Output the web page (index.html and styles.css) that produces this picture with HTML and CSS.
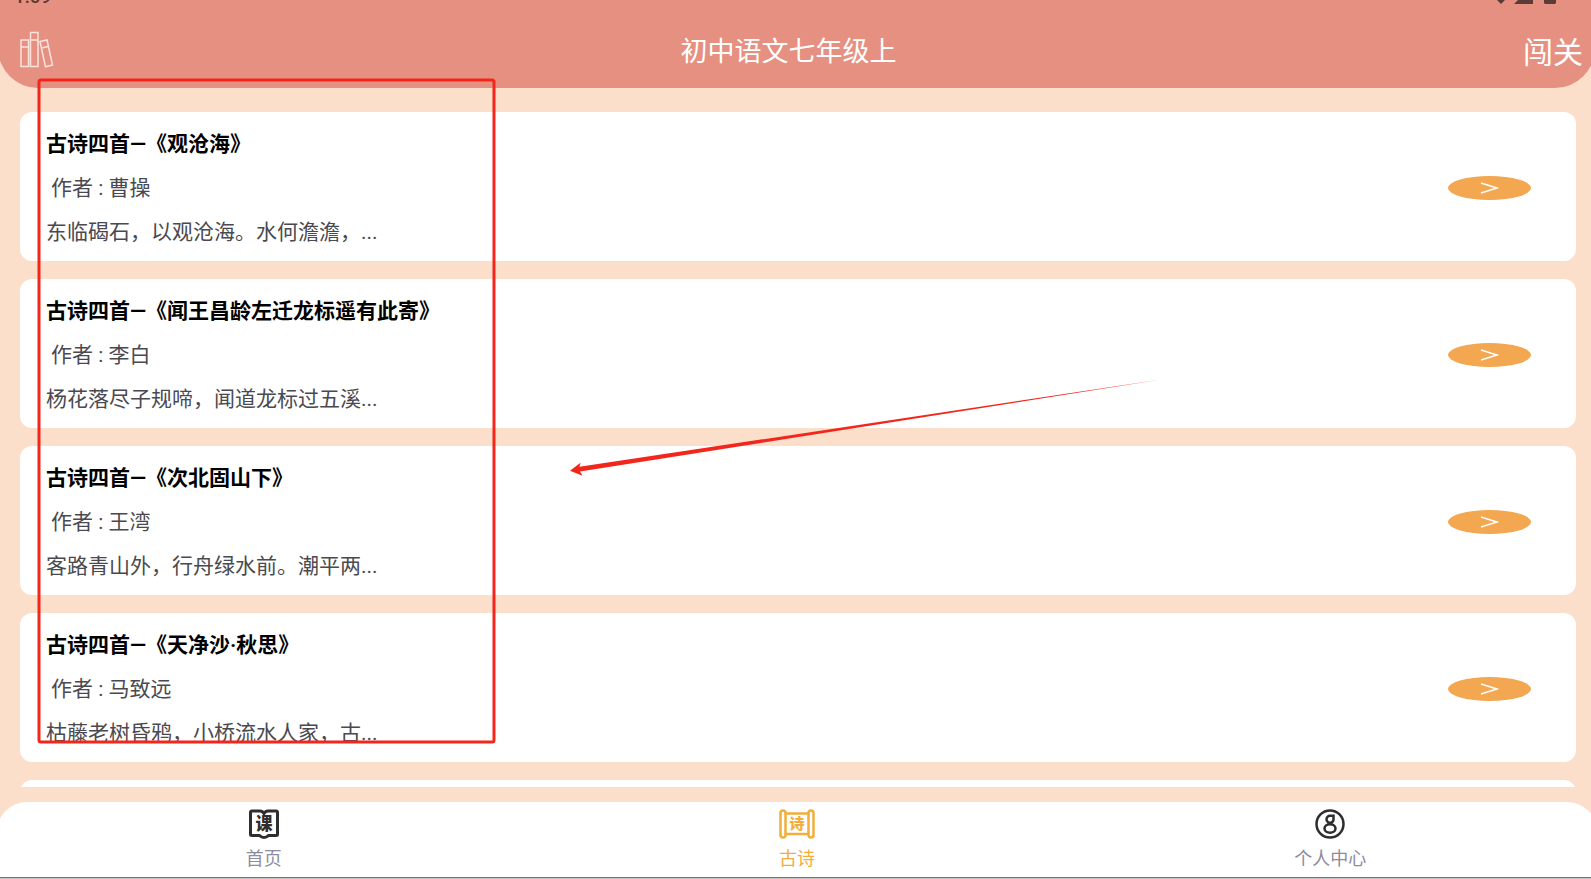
FILE: index.html
```html
<!DOCTYPE html>
<html lang="zh-CN">
<head>
  <meta charset="UTF-8" />
  <meta name="viewport" content="width=device-width, initial-scale=1.0"/>
  <title>初中语文七年级上</title>
  <link rel="stylesheet" href="styles.css">
</head>
<body>
  <div class="app">
    <header class="header">
      <div class="status-bar">
        <span class="clock">1:09</span>
        <svg class="status-icons" width="60" height="4" viewBox="0 0 60 4" aria-hidden="true">
          <path d="M0 0h8L4 4z M17 4l4-4h15v4z M47 0h12v3l-1 1H48l-1-1z"/>
        </svg>
      </div>
      <div class="toolbar">
        <button class="books" aria-label="books">
          <svg width="34" height="38" viewBox="0 0 34 38">
            <path d="M1 9h7.500v26.500H1z M1 16h7.500 M10.500 1.500h7.500v34h-7.500z M10.500 9h7.500 M20 10.500l7-1.500 5.500 25-7 1.800z M21.500 17l7-1.600"/>
          </svg>
        </button>
        <h1>初中语文七年级上</h1>
        <button class="challenge">闯关</button>
      </div>
    </header>

    <ul class="list">
      <li class="card">
        <div class="poem">
          <h2>古诗四首—《观沧海》</h2>
          <p class="author">作者 : 曹操</p>
          <p>东临碣石，以观沧海。水何澹澹，...</p>
        </div>
        <button class="go" aria-label="观沧海"><svg width="20" height="12" viewBox="0 0 20 12"><path d="M1 1l16 5-16 5"/></svg></button>
      </li>
      <li class="card">
        <div class="poem">
          <h2>古诗四首—《闻王昌龄左迁龙标遥有此寄》</h2>
          <p class="author">作者 : 李白</p>
          <p>杨花落尽子规啼，闻道龙标过五溪...</p>
        </div>
        <button class="go" aria-label="闻王昌龄左迁龙标遥有此寄"><svg width="20" height="12" viewBox="0 0 20 12"><path d="M1 1l16 5-16 5"/></svg></button>
      </li>
      <li class="card">
        <div class="poem">
          <h2>古诗四首—《次北固山下》</h2>
          <p class="author">作者 : 王湾</p>
          <p>客路青山外，行舟绿水前。潮平两...</p>
        </div>
        <button class="go" aria-label="次北固山下"><svg width="20" height="12" viewBox="0 0 20 12"><path d="M1 1l16 5-16 5"/></svg></button>
      </li>
      <li class="card">
        <div class="poem">
          <h2>古诗四首—《天净沙·秋思》</h2>
          <p class="author">作者 : 马致远</p>
          <p>枯藤老树昏鸦，小桥流水人家，古...</p>
        </div>
        <button class="go" aria-label="天净沙·秋思"><svg width="20" height="12" viewBox="0 0 20 12"><path d="M1 1l16 5-16 5"/></svg></button>
      </li>
      <li class="card"></li>
    </ul>

    <nav class="tabs">
      <a href="#home">
        <svg width="36" height="30" viewBox="0 0 36 30">
          <path class="line" d="M18 4.500Q16.500 2 14 2H6Q4.500 2 4.500 3.500V25.500Q4.500 26.500 6 26.500H13.500Q15.500 28.500 18 28.500T22.500 26.500H30Q31.500 26.500 31.500 25.500V3.500Q31.500 2 30 2H22Q19.500 2 18 4.500z"/>
          <text x="18" y="21" font-size="17">课</text>
        </svg>
        <span>首页</span>
      </a>
      <a href="#poems" class="active">
        <svg width="36" height="30" viewBox="0 0 36 30">
          <path class="line" d="M7 4.500H29 M7 25H29"/>
          <rect class="line" x="1.500" y="1.500" width="5" height="27" rx="2.500"/>
          <rect class="line" x="29.500" y="1.500" width="5" height="27" rx="2.500"/>
          <text x="18" y="20" font-size="15">诗</text>
        </svg>
        <span>古诗</span>
      </a>
      <a href="#me">
        <svg width="36" height="30" viewBox="0 0 36 30">
          <circle class="line thin" cx="18" cy="15" r="13.500"/>
          <path class="line thin" d="M21.500 6.800V10A3.500 3.500 0 1 1 18 6.800z"/>
          <ellipse class="line thin" cx="18" cy="19.500" rx="5.500" ry="4.200"/>
        </svg>
        <span>个人中心</span>
      </a>
    </nav>
    <div class="edge"></div>
  </div>

  <!-- highlight box and arrow over the list -->
  <svg class="marks" width="1170" height="750" viewBox="0 0 1170 750" aria-hidden="true">
    <rect x="39" y="80" width="455" height="662" rx="2"/>
    <path d="M570 470.700L580.500 462.700 579.500 466.800 1161 379.500 580 471.600 582.500 475.700z"/>
  </svg>
</body>
</html>
```
FILE: styles.css
```css
:root {
  --primary: #e59081;
  --background: #fcdfcb;
  --orange: #f3a750;
  --active: #f2ae3d;
  --text: #4a494f;
  --red: #f3261b;
}

* {
  box-sizing: border-box;
  margin: 0;
  padding: 0;
  font-family: Roboto, "Noto Sans CJK SC", sans-serif;
}

body {
  background: var(--background);
  color: var(--text);
  overflow: hidden;
}

button {
  border: none;
  background: none;
  color: #fff;
  cursor: pointer;
}

.app {
  display: flex;
  flex-direction: column;
  height: 100vh;
}

.header {
  height: 88px;
  margin: 0 -4px 0 -2px;
  background: var(--primary);
  border-radius: 0 0 40px 40px;
  overflow: hidden;
}

.status-bar {
  display: flex;
  justify-content: space-between;
  align-items: flex-end;
  height: 4px;
  padding: 0 38px 0 16px;
  color: #5c3a35;
}

.clock {
  font-size: 19px;
  font-weight: 500;
  line-height: 14px;
}

.status-icons {
  fill: #5c3a35;
}

.toolbar {
  display: flex;
  justify-content: space-between;
  align-items: center;
  height: 91px;
  padding: 0 12px 0 22px;
}

.books {
  width: 34px;
  height: 38px;
}

.books svg {
  display: block;
  fill: none;
  stroke: #fbe3dd;
  stroke-width: 1.5;
}

.toolbar h1 {
  font-size: 27px;
  font-weight: 400;
  color: #fff;
}

.challenge {
  font-size: 30px;
}

.list {
  flex: 1;
  min-height: 0;
  display: flex;
  flex-direction: column;
  gap: 18px;
  margin-bottom: 15px;
  padding: 24px 15px 0 20px;
  list-style: none;
  overflow: hidden;
}

.card {
  flex: none;
  display: flex;
  justify-content: space-between;
  align-items: center;
  min-height: 149px;
  padding: 10px 45px 7px 26px;
  background: #fff;
  border-radius: 12px;
}

.poem {
  font-size: 21px;
  line-height: 44px;
}

.poem h2 {
  font-size: 21px;
  font-weight: 700;
  color: #000;
}

.author {
  padding-left: 5px;
}

.go {
  display: flex;
  justify-content: center;
  align-items: center;
  width: 83px;
  height: 24px;
  background: var(--orange);
  border-radius: 50%;
}

.go svg {
  fill: none;
  stroke: #fff;
  stroke-width: 1.5;
}

.tabs {
  display: grid;
  grid-template-columns: repeat(3, 1fr);
  height: 75px;
  margin: 0 -6px 0 -3px;
  background: #fff;
  border-radius: 30px 30px 0 0;
}

.tabs a {
  display: flex;
  flex-direction: column;
  align-items: center;
  gap: 7px;
  padding-top: 7px;
  font-size: 18px;
  line-height: 26px;
  color: #8d8b9f;
  text-decoration: none;
}

.tabs svg {
  fill: #2e2e2e;
  stroke: none;
}

.tabs text {
  font-weight: 900;
  text-anchor: middle;
}

.tabs .line {
  fill: none;
  stroke: #2e2e2e;
  stroke-width: 3;
}

.tabs .thin {
  stroke-width: 2.5;
}

.tabs .active {
  color: var(--active);
}

.tabs .active svg {
  fill: var(--active);
}

.tabs .active .line {
  stroke: var(--active);
  stroke-width: 2.5;
}

.edge {
  height: 2px;
  background: #c4c4c4;
  border-top: 1px solid #747474;
}

.marks {
  position: absolute;
  top: 0;
  left: 0;
  fill: var(--red);
  pointer-events: none;
}

.marks rect {
  fill: none;
  stroke: var(--red);
  stroke-width: 3;
}
```
